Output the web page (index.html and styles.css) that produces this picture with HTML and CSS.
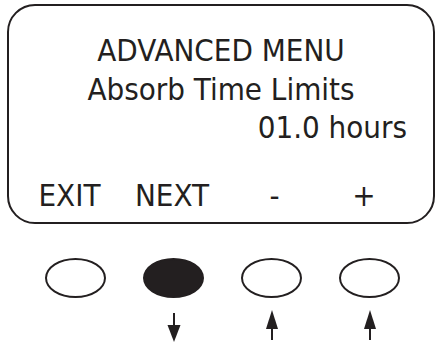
FILE: index.html
```html
<!DOCTYPE html>
<html lang="en">
<head>
    <meta charset="UTF-8">
    <meta name="viewport" content="width=device-width, initial-scale=1.0">
    <title>Advanced Menu</title>
    <link rel="stylesheet" href="styles.css">
</head>
<body>
<section class="screen">
    <p class="line">ADVANCED MENU</p>
    <p class="line">Absorb Time Limits</p>
    <p class="line value">01.0 hours</p>
    <div class="softkeys">
        <span class="exit">EXIT</span>
        <span class="next">NEXT</span>
        <span class="minus">-</span>
        <span class="plus">+</span>
    </div>
</section>
<div class="buttons">
    <span class="btn"></span>
    <span class="btn on"></span>
    <span class="btn"></span>
    <span class="btn"></span>
</div>
<div class="arrows">
    <span></span>
    <svg width="14" height="32" viewBox="0 0 14 32"><path d="M7 3V16" stroke="#231f20" stroke-width="2"/><path d="M0.5 15H13.5L7 32Z" fill="#231f20"/></svg>
    <svg width="14" height="32" viewBox="0 0 14 32"><path d="M7 16V30" stroke="#231f20" stroke-width="2"/><path d="M1 19H13L7 0Z" fill="#231f20"/></svg>
    <svg width="14" height="32" viewBox="0 0 14 32"><path d="M7 16V30" stroke="#231f20" stroke-width="2"/><path d="M1 19H13L7 0Z" fill="#231f20"/></svg>
</div>
</body>
</html>
```

FILE: styles.css
```css
* {margin:0; padding:0; box-sizing:border-box;}
body {background:#fff; color:#231f20; font-family:"DejaVu Sans Condensed", "DejaVu Sans", sans-serif; font-stretch:condensed; overflow:hidden;}
.screen {margin:4px 0 0 7px; width:428px; height:220px; border:2px solid #231f20; border-radius:28px; padding:25px 26px 8px 0; display:flex; flex-direction:column;}
.line {font-size:31px; line-height:38.5px; text-align:center; padding-left:26px;}
.value {text-align:right;}
.softkeys {margin-top:auto; margin-left:17.5px; display:grid; grid-template-columns:repeat(4, 98px); font-size:31px; line-height:38.5px; text-align:center;}
.softkeys .exit {padding-right:12px;}
.softkeys .next {padding-right:3px;}
.softkeys .minus {padding-left:6px;}
.softkeys .plus {padding-right:11px;}
.buttons {margin:34px 0 0 26.5px; display:grid; grid-template-columns:repeat(4, 98px); justify-items:center;}
.btn {width:61px; height:40px; border:2.5px solid #231f20; border-radius:50%;}
.btn.on {background:#231f20;}
.arrows {margin:12px 0 0 26.5px; display:grid; grid-template-columns:repeat(4, 98px); justify-items:center;}
.arrows svg {display:block;}
```
